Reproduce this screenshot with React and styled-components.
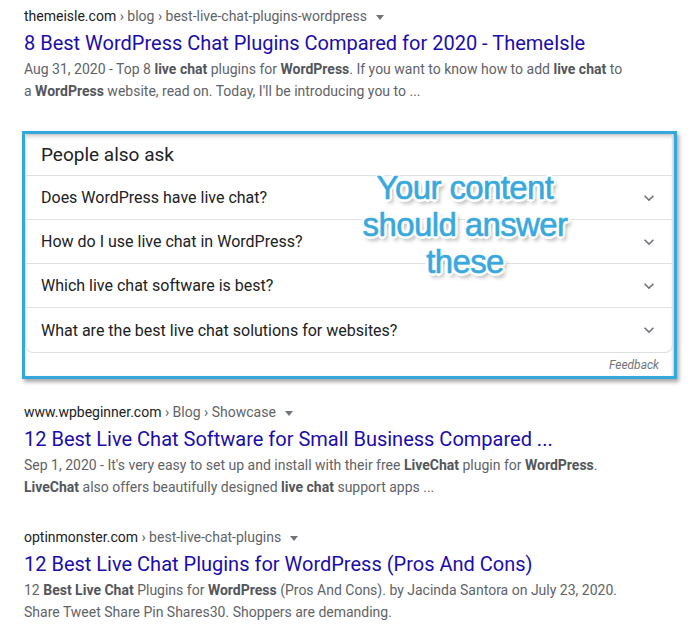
import React from 'react';
import styled, { createGlobalStyle } from 'styled-components';

const Global = createGlobalStyle`
  body {
    margin: 0;
    background: #fff;
    font-family: Roboto, "Liberation Sans", Arial, sans-serif;
  }
`;

const Page = styled.div`
  width: 693px;
  height: 637px;
  padding: 6px 0 0 24px;
  box-sizing: border-box;
  overflow: hidden;
`;

const Result = styled.div`
  margin-top: ${props => props.gap || 0}px;
`;

const Cite = styled.div`
  display: flex;
  align-items: center;
  height: 20px;
  font-size: 14px;
  line-height: 20px;
  color: #202124;
  white-space: nowrap;
`;

const Crumbs = styled.span`
  color: #5f6368;
`;

const Caret = styled.span`
  display: inline-block;
  margin-left: 9px;
  margin-top: 2px;
  border-left: 4.5px solid transparent;
  border-right: 4.5px solid transparent;
  border-top: 5px solid #70757a;
`;

const Title = styled.a`
  display: block;
  margin-top: 4px;
  font-size: 20px;
  line-height: 26px;
  color: #1a0dab;
  text-decoration: none;
  white-space: nowrap;
`;

const Snippet = styled.div`
  margin-top: 2px;
  font-size: 14px;
  line-height: 22px;
  color: #5f6368;
  b {
    color: #52565b;
    font-weight: 700;
  }
`;

const Highlight = styled.div`
  position: relative;
  margin: 29px 0 0 -2px;
  width: 655px;
  box-sizing: border-box;
  border: 3px solid #35a8db;
  background: #fff;
  box-shadow: 2px 3px 4px rgba(0, 0, 0, 0.35), inset 0 3px 4px -1px rgba(0, 0, 0, 0.22),
    inset -2px 0 3px -1px rgba(0, 0, 0, 0.15);
`;

const Card = styled.div`
  margin-right: 1px;
  border: 1px solid #dfe1e5;
  border-top: none;
  border-radius: 0 0 8px 8px;
`;

const AskHeader = styled.div`
  height: 42px;
  box-sizing: border-box;
  padding-left: 15px;
  display: flex;
  align-items: center;
  border-bottom: 1px solid #dfe1e5;
  font-size: 19px;
  color: #202124;
`;

const Question = styled.div`
  height: 44px;
  box-sizing: border-box;
  padding: 0 13px 0 15px;
  display: flex;
  align-items: center;
  justify-content: space-between;
  border-bottom: ${props => (props.last ? 'none' : '1px solid #dfe1e5')};
  font-size: 16px;
  color: #202124;
`;

const Feedback = styled.div`
  height: 23px;
  padding-right: 15px;
  display: flex;
  align-items: center;
  justify-content: flex-end;
  font-size: 12px;
  font-style: italic;
  color: #70757a;
`;

const Callout = styled.div`
  position: absolute;
  left: 300px;
  top: 35px;
  width: 280px;
  text-align: center;
  font-family: "Liberation Sans", Arial, sans-serif;
  font-size: 33px;
  line-height: 37px;
  letter-spacing: -0.6px;
  color: #38a9de;
  -webkit-text-stroke: 0.6px #38a9de;
  pointer-events: none;
  text-shadow: -2px -2px 0 #fff, 2px -2px 0 #fff, -2px 2px 0 #fff, 2px 2px 0 #fff,
    0 -3px 0 #fff, 0 3px 0 #fff, -3px 0 0 #fff, 3px 0 0 #fff, 3px 4px 4px rgba(0, 0, 0, 0.45);
`;

const Chevron = () => (
  <svg width="20" height="20" viewBox="0 0 24 24" fill="#70757a">
    <path d="M16.59 8.59L12 13.17 7.41 8.59 6 10l6 6 6-6z" />
  </svg>
);

const questions = [
  'Does WordPress have live chat?',
  'How do I use live chat in WordPress?',
  'Which live chat software is best?',
  'What are the best live chat solutions for websites?',
];

export default function App() {
  return (
    <Page>
      <Global />
      <Result>
        <Cite>
          themeisle.com<Crumbs>&nbsp;› blog › best-live-chat-plugins-wordpress</Crumbs>
          <Caret />
        </Cite>
        <Title href="#">8 Best WordPress Chat Plugins Compared for 2020 - ThemeIsle</Title>
        <Snippet>
          Aug 31, 2020 - Top 8 <b>live chat</b> plugins for <b>WordPress</b>. If you want to know how to add{' '}
          <b>live chat</b> to
          <br />a <b>WordPress</b> website, read on. Today, I'll be introducing you to ...
        </Snippet>
      </Result>

      <Highlight>
        <Card>
          <AskHeader>People also ask</AskHeader>
          {questions.map((q, i) => (
            <Question key={q} last={i === questions.length - 1}>
              {q}
              <Chevron />
            </Question>
          ))}
        </Card>
        <Feedback>Feedback</Feedback>
        <Callout>
          Your content
          <br />
          should answer
          <br />
          these
        </Callout>
      </Highlight>

      <Result gap={23}>
        <Cite>
          www.wpbeginner.com<Crumbs>&nbsp;› Blog › Showcase</Crumbs>
          <Caret />
        </Cite>
        <Title href="#">12 Best Live Chat Software for Small Business Compared ...</Title>
        <Snippet>
          Sep 1, 2020 - It's very easy to set up and install with their free <b>LiveChat</b> plugin for{' '}
          <b>WordPress</b>.
          <br />
          <b>LiveChat</b> also offers beautifully designed <b>live chat</b> support apps ...
        </Snippet>
      </Result>

      <Result gap={29}>
        <Cite>
          optinmonster.com<Crumbs>&nbsp;› best-live-chat-plugins</Crumbs>
          <Caret />
        </Cite>
        <Title href="#">12 Best Live Chat Plugins for WordPress (Pros And Cons)</Title>
        <Snippet>
          12 <b>Best Live Chat</b> Plugins for <b>WordPress</b> (Pros And Cons). by Jacinda Santora on July 23, 2020.
          <br />
          Share Tweet Share Pin Shares30. Shoppers are demanding.
        </Snippet>
      </Result>
    </Page>
  );
}
